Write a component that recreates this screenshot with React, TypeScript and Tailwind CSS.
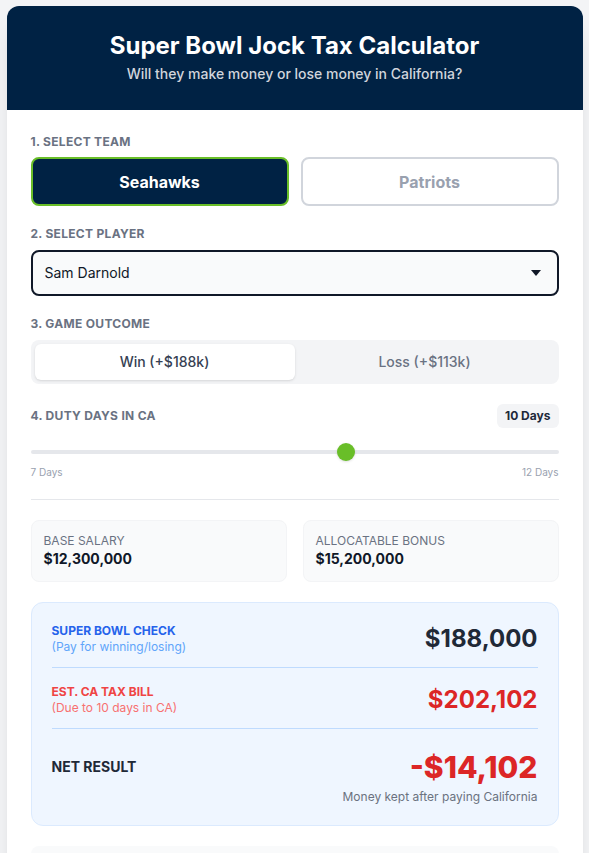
import React, { useState } from 'react';

type Team = 'seahawks' | 'patriots';
type Outcome = 'win' | 'loss';

const MIN_DAYS = 7;
const MAX_DAYS = 12;

const formatMoney = (n: number): string =>
  (n < 0 ? '-$' : '$') + Math.abs(n).toLocaleString('en-US');

const SectionLabel: React.FC<{ children: React.ReactNode }> = ({ children }) => (
  <p className="text-xs font-bold uppercase tracking-wide text-gray-500">{children}</p>
);

const App: React.FC = () => {
  const [team, setTeam] = useState<Team>('seahawks');
  const [outcome, setOutcome] = useState<Outcome>('win');
  const days = 10;

  const check = outcome === 'win' ? 188000 : 113000;
  const taxBill = 202102;
  const net = check - taxBill;
  const pct = (days - MIN_DAYS) / (MAX_DAYS - MIN_DAYS);

  return (
    <div
      className="min-h-screen bg-gray-100 pt-[6px]"
      style={{ fontFamily: 'Inter, "Noto Sans", sans-serif' }}
    >
      <div className="mx-auto max-w-xl overflow-hidden rounded-xl bg-white shadow-xl">
        {/* Header */}
        <div className="bg-[#002244] px-6 pb-[26px] pt-6 text-center">
          <h1 className="text-2xl font-bold text-white">Super Bowl Jock Tax Calculator</h1>
          <p className="mt-0.5 text-sm font-medium text-gray-300">
            Will they make money or lose money in California?
          </p>
        </div>

        <div className="flex flex-col gap-5 p-6">
          {/* 1. Team */}
          <div>
            <div className="mb-[7px]">
              <SectionLabel>1. Select Team</SectionLabel>
            </div>
            <div className="grid grid-cols-2 gap-3">
              <button
                onClick={() => setTeam('seahawks')}
                className={`h-[49px] rounded-lg border-2 text-base font-bold ${
                  team === 'seahawks'
                    ? 'border-[#69be28] bg-[#002244] text-white'
                    : 'border-gray-300 bg-white text-gray-400'
                }`}
              >
                Seahawks
              </button>
              <button
                onClick={() => setTeam('patriots')}
                className={`h-[49px] rounded-lg border-2 text-base font-bold ${
                  team === 'patriots'
                    ? 'border-[#c60c30] bg-[#002244] text-white'
                    : 'border-gray-300 bg-white text-gray-400'
                }`}
              >
                Patriots
              </button>
            </div>
          </div>

          {/* 2. Player */}
          <div>
            <div className="mb-2">
              <SectionLabel>2. Select Player</SectionLabel>
            </div>
            <div className="relative">
              <select className="h-[46px] w-full appearance-none rounded-lg border-2 border-gray-900 bg-gray-50 px-3 text-sm text-gray-900 outline-none">
                <option>Sam Darnold</option>
                <option>Geno Smith</option>
                <option>DK Metcalf</option>
              </select>
              <svg
                className="pointer-events-none absolute right-[18px] top-1/2 -translate-y-1/2"
                width="10"
                height="6"
                viewBox="0 0 10 6"
              >
                <path d="M0 0h10L5 6z" fill="#111827" />
              </svg>
            </div>
          </div>

          {/* 3. Outcome */}
          <div>
            <div className="mb-2">
              <SectionLabel>3. Game Outcome</SectionLabel>
            </div>
            <div className="grid grid-cols-2 rounded-lg bg-gray-100 p-1">
              <button
                onClick={() => setOutcome('win')}
                className={`rounded-md py-2 text-sm font-medium ${
                  outcome === 'win' ? 'bg-white text-gray-700 shadow-sm' : 'text-gray-500'
                }`}
              >
                Win (+$188k)
              </button>
              <button
                onClick={() => setOutcome('loss')}
                className={`rounded-md py-2 text-sm font-medium ${
                  outcome === 'loss' ? 'bg-white text-gray-700 shadow-sm' : 'text-gray-500'
                }`}
              >
                Loss (+$113k)
              </button>
            </div>
          </div>

          {/* 4. Days */}
          <div>
            <div className="flex items-center justify-between">
              <SectionLabel>4. Duty Days in CA</SectionLabel>
              <span className="rounded-md bg-gray-100 px-2 py-1 text-xs font-bold text-gray-800">
                {days} Days
              </span>
            </div>
            <div className="relative mt-[15px] h-[18px]">
              <div className="absolute inset-x-0 top-1/2 h-1 -translate-y-1/2 rounded-full bg-gray-200" />
              <div
                className="absolute top-0 h-[18px] w-[18px] rounded-full bg-[#69be28] shadow"
                style={{ left: `calc(${pct} * (100% - 18px))` }}
              />
            </div>
            <div className="mt-1 flex justify-between text-[10px] leading-[14px] text-gray-400">
              <span>7 Days</span>
              <span>12 Days</span>
            </div>
          </div>

          {/* Contract */}
          <div className="grid grid-cols-2 gap-4 border-t border-gray-200 pt-5">
            <div className="rounded-lg border border-gray-100 bg-gray-50 p-3">
              <p className="text-xs uppercase text-gray-500">Base Salary</p>
              <p className="text-sm font-bold text-gray-900">$12,300,000</p>
            </div>
            <div className="rounded-lg border border-gray-100 bg-gray-50 p-3">
              <p className="text-xs uppercase text-gray-500">Allocatable Bonus</p>
              <p className="text-sm font-bold text-gray-900">$15,200,000</p>
            </div>
          </div>

          {/* Results */}
          <div className="rounded-xl border border-[#dbeafe] bg-[#eff6ff] p-5">
            <div className="flex items-center justify-between border-b border-[#bfdbfe] pb-3">
              <div>
                <p className="text-xs font-bold uppercase text-[#2563eb]">Super Bowl Check</p>
                <p className="text-xs text-[#60a5fa]">(Pay for winning/losing)</p>
              </div>
              <p className="text-2xl font-bold text-[#1f2937]">{formatMoney(check)}</p>
            </div>
            <div className="flex items-center justify-between border-b border-[#bfdbfe] pb-3 pt-4">
              <div>
                <p className="text-xs font-bold uppercase text-[#ef4444]">Est. CA Tax Bill</p>
                <p className="text-xs text-[#f87171]">(Due to {days} days in CA)</p>
              </div>
              <p className="text-2xl font-bold text-[#dc2626]">{formatMoney(taxBill)}</p>
            </div>
            <div className="flex items-start justify-between pt-5">
              <p className="pt-2 text-sm font-bold uppercase text-[#1f2937]">Net Result</p>
              <div className="text-right">
                <p className="text-3xl font-extrabold text-[#dc2626]">{formatMoney(net)}</p>
                <p className="mt-1 text-xs text-[#6b7280]">Money kept after paying California</p>
              </div>
            </div>
          </div>

          {/* Note */}
          <div className="rounded-lg bg-gray-50 px-4 pb-4 pt-6 text-xs text-gray-500">
            Estimates use California's duty-day allocation of total compensation at the top
            marginal rate. Actual liability depends on credits from the player's home state.
          </div>
        </div>
      </div>
    </div>
  );
};

export default App;
